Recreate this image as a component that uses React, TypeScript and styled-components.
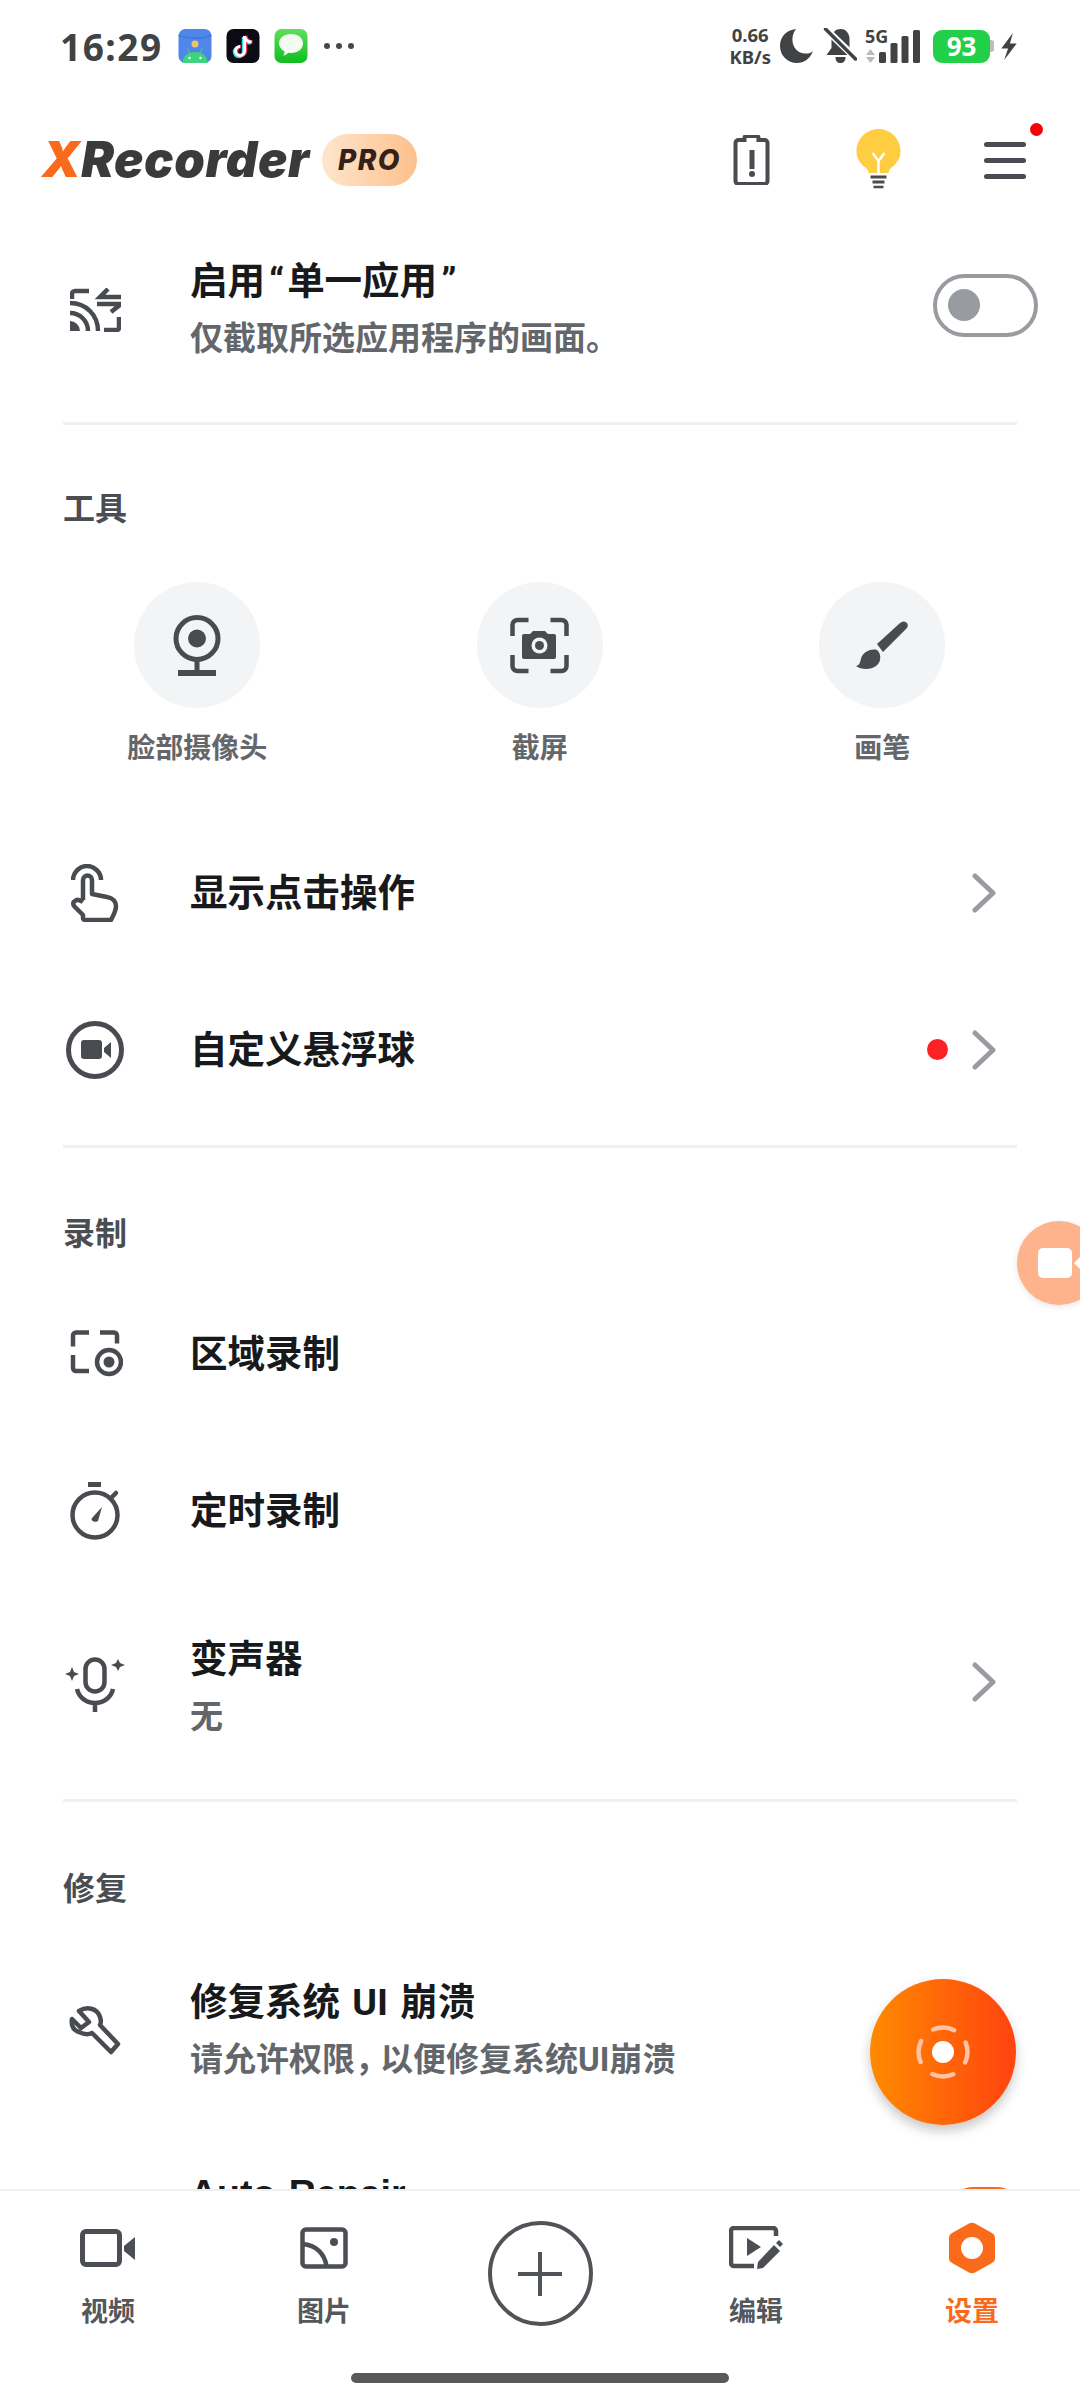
import React from "react";
import styled, { createGlobalStyle } from "styled-components";

const GlobalStyle = createGlobalStyle`
  html, body {
    margin: 0;
    padding: 0;
    background: #fff;
    font-family: Roboto, "Noto Sans CJK SC", sans-serif;
  }
  * { box-sizing: border-box; }
`;

const Page = styled.div`
  position: relative;
  width: 1080px;
  height: 2400px;
  overflow: hidden;
  background: #fff;
  display: flex;
  flex-direction: column;
`;

/* status bar */
const StatusBar = styled.div`
  height: 92px;
  flex-shrink: 0;
  padding: 0 63px 0 60px;
  display: flex;
  align-items: center;
  justify-content: space-between;
  color: #404244;
`;

const StatusGroup = styled.div`
  display: flex;
  align-items: center;
`;

const Clock = styled.span`
  font-family: "Noto Sans", sans-serif;
  font-size: 37px;
  font-weight: 700;
  letter-spacing: 1.5px;
  margin-right: 15px;
`;

const NotifIcon = styled.svg`
  width: 34px;
  height: 34px;
  margin-right: 14px;
`;

const MoreDots = styled.svg`
  margin-left: 2px;
`;

const NetSpeed = styled.div`
  display: flex;
  flex-direction: column;
  align-items: center;
  font-family: "Noto Sans", sans-serif;
  font-weight: 700;
  font-size: 18.5px;
  line-height: 22px;
  margin-right: 9px;
`;

const StatusGlyph = styled.svg<{ $left?: number }>`
  display: block;
  margin-left: ${({ $left }) => $left ?? 0}px;
`;

const SignalBox = styled.div`
  position: relative;
  width: 55px;
  height: 34px;
  margin-left: 8px;
`;

const NetworkType = styled.span`
  position: absolute;
  left: 0;
  top: -3px;
  font-family: "Noto Sans", sans-serif;
  font-weight: 700;
  font-size: 18px;
  line-height: 20px;
`;

const NetworkArrows = styled.svg`
  position: absolute;
  left: 1px;
  bottom: 0;
`;

const SignalBars = styled.svg`
  position: absolute;
  right: 0;
  bottom: 0;
`;

const Battery = styled.div`
  width: 57px;
  height: 33px;
  border-radius: 9px;
  background: #22cf48;
  color: #fff;
  font-family: "Noto Sans", sans-serif;
  font-size: 26px;
  font-weight: 700;
  display: flex;
  align-items: center;
  justify-content: center;
  margin-left: 13px;
`;

const BatteryCap = styled.div`
  width: 4px;
  height: 12px;
  background: #bdbdbd;
  border-radius: 0 3px 3px 0;
  margin-right: 7px;
`;

/* header */
const Header = styled.div`
  height: 136px;
  flex-shrink: 0;
  padding: 0 54px 0 42px;
  display: flex;
  align-items: center;
`;

const Logo = styled.div`
  font-family: Inter, sans-serif;
  font-size: 49px;
  font-weight: 900;
  font-style: italic;
  color: #3a3a3a;
  letter-spacing: 0.6px;
  line-height: 52px;
`;

const LogoX = styled.span`
  color: #fb6a1c;
`;

const ProBadge = styled.div`
  width: 95px;
  height: 52px;
  margin-left: 12px;
  border-radius: 26px;
  background: linear-gradient(90deg, #fde6cd, #fdc08c);
  color: #33211a;
  font-family: Inter, sans-serif;
  font-size: 28px;
  font-weight: 800;
  font-style: italic;
  letter-spacing: 1.5px;
  display: flex;
  align-items: center;
  justify-content: center;
`;

const HeaderActions = styled.div`
  margin-left: auto;
  display: flex;
  align-items: center;
`;

const HeaderIcon = styled.svg<{ $gap: number }>`
  display: block;
  margin-left: ${({ $gap }) => $gap}px;
`;

const MenuButton = styled.div`
  position: relative;
  margin-left: 83px;
  height: 37px;
`;

const MenuDot = styled.span`
  position: absolute;
  top: -19px;
  right: -17px;
  width: 13px;
  height: 13px;
  border-radius: 50%;
  background: #fa0007;
`;

/* list */
const Content = styled.div`
  flex: 1;
  min-height: 0;
  overflow: hidden;
  display: flex;
  flex-direction: column;
`;

const Row = styled.div<{ $height: number; $top?: number }>`
  height: ${({ $height }) => $height}px;
  margin-top: ${({ $top }) => $top ?? 0}px;
  flex-shrink: 0;
  padding: 0 42px 0 63px;
  display: flex;
  align-items: center;
`;

const RowIcon = styled.div<{ $shift?: number }>`
  width: 64px;
  margin-right: 63px;
  margin-top: ${({ $shift }) => $shift ?? 0}px;
  display: flex;
  justify-content: center;
  flex-shrink: 0;
  color: #484b4f;
`;

const RowText = styled.div<{ $shift?: number }>`
  flex: 1;
  min-width: 0;
  margin-top: ${({ $shift }) => $shift ?? 0}px;
  display: flex;
  flex-direction: column;
  gap: 20px;
`;

const RowTitle = styled.div`
  font-size: 37.5px;
  line-height: 38px;
  font-weight: 700;
  color: #18191b;
  word-spacing: 3px;
`;

const Quote = styled.span`
  padding: 0 3px 0 4px;
`;

const RowSub = styled.div`
  font-size: 33px;
  line-height: 38px;
  font-weight: 700;
  color: #63676b;
`;

const TightComma = styled.span`
  letter-spacing: -8px;
`;

const Divider = styled.div<{ $top: number }>`
  height: 3px;
  flex-shrink: 0;
  margin: ${({ $top }) => $top}px 63px 0;
  background: #eff0f1;
`;

const SectionTitle = styled.div<{ $top: number; $bottom: number }>`
  flex-shrink: 0;
  padding: ${({ $top }) => $top}px 63px 0;
  margin-bottom: ${({ $bottom }) => $bottom}px;
  font-size: 32px;
  line-height: 38px;
  font-weight: 700;
  color: #4a4d51;
`;

const Toggle = styled.div`
  width: 105px;
  height: 63px;
  margin-top: -10px;
  flex-shrink: 0;
  border: 4px solid #989ca0;
  border-radius: 32px;
  display: flex;
  align-items: center;
  padding-left: 11px;
`;

const ToggleKnob = styled.span`
  width: 32px;
  height: 32px;
  border-radius: 50%;
  background: #989ca0;
`;

const RedDot = styled.span`
  width: 21px;
  height: 21px;
  border-radius: 50%;
  background: #fb2226;
  margin-right: 24px;
`;

const Chevron = styled.svg`
  display: block;
  margin-right: 42px;
`;

const ToolGrid = styled.div`
  display: flex;
  flex-shrink: 0;
  padding-left: 26px;
`;

const Tool = styled.div`
  width: 342.5px;
  display: flex;
  flex-direction: column;
  align-items: center;
`;

const ToolCircle = styled.div`
  width: 126px;
  height: 126px;
  flex-shrink: 0;
  border-radius: 50%;
  background: #f3f4f6;
  display: flex;
  align-items: center;
  justify-content: center;
  margin-bottom: 24px;
`;

const ToolLabel = styled.div`
  font-size: 28px;
  line-height: 34px;
  font-weight: 700;
  color: #63676b;
`;

const PartialTitle = styled(RowTitle)`
  font-family: "Liberation Sans", sans-serif;
`;

/* floating buttons */
const SideBubble = styled.div`
  position: absolute;
  left: 1017px;
  top: 1221px;
  width: 84px;
  height: 84px;
  border-radius: 50%;
  background: #ffb38c;
  box-shadow: 0 2px 6px rgba(0, 0, 0, 0.1);
`;

const SideBubbleIcon = styled.svg`
  position: absolute;
  left: 21px;
  top: 27px;
`;

const RecordFab = styled.div`
  position: absolute;
  left: 870px;
  top: 1979px;
  width: 146px;
  height: 146px;
  border-radius: 50%;
  background: linear-gradient(90deg, #ff8a00, #ff4310);
  box-shadow: 0 6px 12px rgba(0, 0, 0, 0.22);
  display: flex;
  align-items: center;
  justify-content: center;
`;

const PeekingToggle = styled.div`
  position: absolute;
  left: 952px;
  top: 2187px;
  width: 66px;
  height: 20px;
  border-radius: 33px 33px 0 0;
  background: #f4681f;
`;

/* bottom nav */
const BottomNav = styled.div`
  position: absolute;
  left: 0;
  right: 0;
  bottom: 0;
  height: 211px;
  background: #fff;
  border-top: 2px solid #eeeff0;
  padding-top: 28px;
  display: grid;
  grid-template-columns: repeat(5, 216px);
`;

const NavItem = styled.div<{ $active?: boolean }>`
  display: flex;
  flex-direction: column;
  align-items: center;
  color: ${({ $active }) => ($active ? "#f96a1a" : "#54575b")};
`;

const NavIconBox = styled.div`
  height: 58px;
  display: flex;
  align-items: center;
  justify-content: center;
  margin-bottom: 18px;
`;

const NavLabel = styled.div`
  font-size: 27px;
  line-height: 34px;
  font-weight: 700;
`;

const AddButton = styled.div`
  width: 105px;
  height: 105px;
  margin-top: 2px;
  border-radius: 50%;
  border: 4px solid #505357;
  display: flex;
  align-items: center;
  justify-content: center;
`;

const HomeIndicator = styled.div`
  position: absolute;
  left: 351px;
  bottom: 17px;
  width: 378px;
  height: 10px;
  border-radius: 5px;
  background: #58595b;
`;

const INK = "#484b4f";

const ChevronRight = () => (
  <Chevron width="24" height="40" viewBox="0 0 24 40">
    <path d="M3 3l18 17L3 37" fill="none" stroke="#989ca0" strokeWidth="5" strokeLinecap="round" strokeLinejoin="round" />
  </Chevron>
);

const CastIcon = () => (
  <svg width="51" height="44" viewBox="0 0 51 44" fill="none" stroke={INK} strokeWidth="4.5">
    <path d="M2 11V6a3 3 0 0 1 3-3h14" />
    <path d="M0 15c16 0 28 12 28 28M0 25c10 0 18 8 18 18" />
    <path d="M0 33a10 10 0 0 1 10 10H0z" fill={INK} stroke="none" />
    <path d="M38 1l-8 8h21M27 16h24l-10 8" />
    <path d="M49 29v11a2 2 0 0 1-2 2H34" />
  </svg>
);

const WebcamIcon = () => (
  <svg width="48" height="61" viewBox="0 0 48 61" fill="none" stroke={INK} strokeWidth="5">
    <circle cx="24" cy="23.5" r="21" />
    <circle cx="24" cy="23.5" r="9" fill={INK} stroke="none" />
    <path d="M24 45v12" />
    <path d="M5 58h38" strokeWidth="6" />
  </svg>
);

const ScreenshotIcon = () => (
  <svg width="59" height="57" viewBox="0 0 59 57" fill="none" stroke={INK} strokeWidth="4.5">
    <path d="M2.500 19V8a5 5 0 0 1 5-5h11M40.500 3h11a5 5 0 0 1 5 5v11M56.500 38v11a5 5 0 0 1-5 5h-11M18.500 54h-11a5 5 0 0 1-5-5V38" />
    <path d="M12 19a2 2 0 0 1 2-2h6l3-3h12l3 3h6a2 2 0 0 1 2 2v21a2 2 0 0 1-2 2H14a2 2 0 0 1-2-2z" fill={INK} stroke="none" />
    <circle cx="29.5" cy="28.5" r="8" fill="#f3f4f6" stroke="none" />
    <circle cx="29.5" cy="28.5" r="4.5" fill={INK} stroke="none" />
  </svg>
);

const BrushIcon = () => (
  <svg width="52" height="49" viewBox="0 0 52 49" fill={INK}>
    <path d="M21 23L44 2q4-3 7 0q2 3-1 6L27 31z" />
    <path d="M21 29c5 4 4 13-1 16-5 4-15 4-20 0 4-1 4-4 5-7 1-6 9-11 16-9z" />
  </svg>
);

const TapIcon = () => (
  <svg width="48" height="58" viewBox="0 0 48 58" fill="none" stroke={INK} strokeWidth="4.5" strokeLinejoin="round">
    <path d="M2 16C2 8 9 2 16 2s14 6 14 14" />
    <path d="M12 36V16a4.500 4.500 0 0 1 9 0v14l15 3c6 1 9 5 9 9 0 5-3 10-5 14H14a2 2 0 0 1-2-2v-3l-9-9c-1-2-1-4 1-5 2-2 5-1 8 1" />
  </svg>
);

const FloatIcon = () => (
  <svg width="58" height="58" viewBox="0 0 58 58">
    <circle cx="29" cy="29" r="26.5" fill="none" stroke={INK} strokeWidth="5" />
    <rect x="15" y="19" width="21" height="19" rx="3" fill={INK} />
    <path d="M38 27l7-6v16l-7-6z" fill={INK} />
  </svg>
);

const AreaIcon = () => (
  <svg width="56" height="47" viewBox="-4 0 56 47" fill="none" stroke={INK} strokeWidth="4.5">
    <path d="M18 2.500H5A3 3 0 0 0 2 5.500v11M29 2.500h14a3 3 0 0 1 3 3v8M2 25v13a3 3 0 0 0 3 3h13" />
    <circle cx="38" cy="32" r="12" />
    <circle cx="38" cy="32" r="5.5" fill={INK} stroke="none" />
  </svg>
);

const TimerIcon = () => (
  <svg width="50" height="58" viewBox="0 0 50 58" fill="none" stroke={INK} strokeWidth="4.5">
    <path d="M18 2.500h13" strokeWidth="5" />
    <circle cx="25" cy="33" r="22.5" />
    <path d="M41 16l5-5" strokeLinecap="round" />
    <path d="M22 36l10-11-4 14c-2 2-8 0-6-3z" fill={INK} stroke="none" />
  </svg>
);

const VoiceIcon = () => (
  <svg width="62" height="56" viewBox="0 0 62 56" fill="none" stroke={INK} strokeWidth="4.5">
    <rect x="21.5" y="2.5" width="19" height="32" rx="9.5" />
    <path d="M13 32c2 9 10 14 18 14s16-5 18-14M31 46v9" />
    <path d="M8 10l2 5 5 2-5 2-2 5-2-5-5-2 5-2zM54 2l2 4 5 2-5 2-2 4-2-4-5-2 5-2z" fill={INK} stroke="none" />
  </svg>
);

const WrenchIcon = () => (
  <svg width="52" height="52" viewBox="0 0 52 52" fill="none" stroke={INK} strokeWidth="4.5" strokeLinejoin="round">
    <path d="M3 14l9 9 8-6-10-11c8-5 18-3 21 6 1 3 1 6 0 8l18 19-7 8-19-19c-4 2-9 1-13-1C4 25 2 20 3 14z" />
  </svg>
);

const App = () => (
  <Page>
    <GlobalStyle />
    <StatusBar>
      <StatusGroup>
        <Clock>16:29</Clock>
        <NotifIcon viewBox="0 0 33 34">
          <rect width="33" height="34" rx="7" fill="#4f86ea" />
          <path d="M0 6c6 4 27 4 33 0" stroke="#3f74d6" strokeWidth="1.5" fill="none" />
          <circle cx="16.5" cy="15" r="3.5" fill="#e6c66a" />
          <path d="M9 19l3 6M24 19l-3 6" stroke="#3fd27f" strokeWidth="1" />
          <path d="M4 34c0-7 5-11 12.500-11S29 27 29 34z" fill="#3fd27f" />
          <circle cx="11" cy="29" r="1.2" fill="#fff" />
          <circle cx="22" cy="29" r="1.2" fill="#fff" />
        </NotifIcon>
        <NotifIcon viewBox="0 0 33 34">
          <rect width="33" height="34" rx="7" fill="#0b0b14" />
          <path d="M18 7v15a4.500 4.500 0 1 1-4.500-4.500M18 7c1 4 4 6 7 6" fill="none" stroke="#2fe3e8" strokeWidth="3.5" transform="translate(-1 1)" />
          <path d="M18 7v15a4.500 4.500 0 1 1-4.500-4.500M18 7c1 4 4 6 7 6" fill="none" stroke="#f4385f" strokeWidth="3.5" transform="translate(1 0)" />
          <path d="M18 7v15a4.500 4.500 0 1 1-4.500-4.500M18 7c1 4 4 6 7 6" fill="none" stroke="#fff" strokeWidth="3" />
        </NotifIcon>
        <NotifIcon viewBox="0 0 33 34">
          <defs>
            <linearGradient id="msgGreen" x1="0" y1="0" x2="0" y2="1">
              <stop offset="0" stopColor="#5ee05a" />
              <stop offset="1" stopColor="#0fbd1e" />
            </linearGradient>
          </defs>
          <rect width="33" height="34" rx="7" fill="url(#msgGreen)" />
          <path d="M16.500 5c7.500 0 12 4 12 9.500s-5 9.500-12 9.500c-1 0-2 0-3-.2-1 1.500-3 2.800-5 2.800 1-1 1.500-2.500 1.500-4C7 20.500 4.500 18 4.500 14.500 4.500 9 9.500 5 16.500 5z" fill="#f2fbf0" />
        </NotifIcon>
        <MoreDots width="30" height="8" viewBox="0 0 30 8" fill="#46484b">
          <circle cx="3" cy="4" r="3" />
          <circle cx="15" cy="4" r="3" />
          <circle cx="27" cy="4" r="3" />
        </MoreDots>
      </StatusGroup>
      <StatusGroup>
        <NetSpeed>
          <span>0.66</span>
          <span>KB/s</span>
        </NetSpeed>
        <StatusGlyph width="33" height="34" viewBox="0 0 33 34" fill="#404244">
          <path d="M16 0C6 1 0 8 0 17c0 10 8 17 17 17 7 0 13-4 16-12-3 3-7 3-11 2C13 22 9 9 16 0z" />
        </StatusGlyph>
        <StatusGlyph $left={10} width="34" height="36" viewBox="0 0 33 36" fill="#404244">
          <path d="M17 1c6 0 9 5 9 10v9l6 7H3l5-7v-9c0-5 3-10 9-10zM12 29h10c0 4-2 6-5 6s-5-2-5-6z" />
          <path d="M2 1l30 29" stroke="#fff" strokeWidth="7" />
          <path d="M2 1l30 30" stroke="#404244" strokeWidth="3.5" strokeLinecap="round" />
        </StatusGlyph>
        <SignalBox>
          <NetworkType>5G</NetworkType>
          <NetworkArrows width="9" height="14" viewBox="0 0 9 14" fill="#b9babb">
            <path d="M4.500 0L9 6H0zM0 8h9l-4.500 6z" />
          </NetworkArrows>
          <SignalBars width="41" height="33" viewBox="0 0 41 33" fill="#404244">
            <rect x="0" y="22" width="7" height="11" rx="1.5" />
            <rect x="11.500" y="13" width="7" height="20" rx="1.5" />
            <rect x="22.500" y="6" width="7" height="27" rx="1.5" />
            <rect x="34" y="0" width="7" height="33" rx="1.5" />
          </SignalBars>
        </SignalBox>
        <Battery>93</Battery>
        <BatteryCap />
        <StatusGlyph width="16" height="27" viewBox="0 0 16 28" fill="#404244">
          <path d="M12 0L0 16h7l-4 12 13-17H9z" />
        </StatusGlyph>
      </StatusGroup>
    </StatusBar>

    <Header>
      <Logo>
        <LogoX>X</LogoX>Recorder
      </Logo>
      <ProBadge>PRO</ProBadge>
      <HeaderActions>
        <HeaderIcon $gap={0} width="37" height="50" viewBox="0 0 36 50">
          <path d="M11 5V3a2 2 0 0 1 2-2h10a2 2 0 0 1 2 2v2h6a3 3 0 0 1 3 3v38a3 3 0 0 1-3 3H5a3 3 0 0 1-3-3V8a3 3 0 0 1 3-3z" fill="none" stroke={INK} strokeWidth="4" />
          <rect x="16" y="15" width="5" height="19" fill={INK} />
          <circle cx="18.5" cy="39" r="3" fill={INK} />
        </HeaderIcon>
        <HeaderIcon $gap={86} width="45" height="62" viewBox="0 0 44 62">
          <path d="M22 0c12 0 22 10 22 22 0 7-3 11-7 15-3 2-5 4-5 7H12c0-3-2-5-5-7-4-4-7-8-7-15C0 10 10 0 22 0z" fill="#fecd42" />
          <path d="M22 44V32M16 24l6 8 6-8" stroke="#fff" strokeWidth="2.5" fill="none" />
          <path d="M14 48h16M16 53h12" stroke={INK} strokeWidth="3" />
          <path d="M17 58h10" stroke={INK} strokeWidth="2.5" />
        </HeaderIcon>
        <MenuButton>
          <svg width="42" height="37" viewBox="0 0 42 37" fill={INK}>
            <rect y="0" width="42" height="5" rx="2.5" />
            <rect y="16" width="42" height="5" rx="2.5" />
            <rect y="32" width="42" height="5" rx="2.5" />
          </svg>
          <MenuDot />
        </MenuButton>
      </HeaderActions>
    </Header>

    <Content>
      <Row $height={164}>
        <RowIcon>
          <CastIcon />
        </RowIcon>
        <RowText>
          <RowTitle>
            启用<Quote>“</Quote>单一应用<Quote>”</Quote>
          </RowTitle>
          <RowSub>仅截取所选应用程序的画面。</RowSub>
        </RowText>
        <Toggle>
          <ToggleKnob />
        </Toggle>
      </Row>
      <Divider $top={30} />
      <SectionTitle $top={65} $bottom={54}>工具</SectionTitle>
      <ToolGrid>
        <Tool>
          <ToolCircle>
            <WebcamIcon />
          </ToolCircle>
          <ToolLabel>脸部摄像头</ToolLabel>
        </Tool>
        <Tool>
          <ToolCircle>
            <ScreenshotIcon />
          </ToolCircle>
          <ToolLabel>截屏</ToolLabel>
        </Tool>
        <Tool>
          <ToolCircle>
            <BrushIcon />
          </ToolCircle>
          <ToolLabel>画笔</ToolLabel>
        </Tool>
      </ToolGrid>
      <Row $height={157} $top={48}>
        <RowIcon>
          <TapIcon />
        </RowIcon>
        <RowText>
          <RowTitle>显示点击操作</RowTitle>
        </RowText>
        <ChevronRight />
      </Row>
      <Row $height={157}>
        <RowIcon>
          <FloatIcon />
        </RowIcon>
        <RowText>
          <RowTitle>自定义悬浮球</RowTitle>
        </RowText>
        <RedDot />
        <ChevronRight />
      </Row>
      <Divider $top={17} />
      <SectionTitle $top={67} $bottom={22}>录制</SectionTitle>
      <Row $height={157}>
        <RowIcon>
          <AreaIcon />
        </RowIcon>
        <RowText>
          <RowTitle>区域录制</RowTitle>
        </RowText>
      </Row>
      <Row $height={157}>
        <RowIcon>
          <TimerIcon />
        </RowIcon>
        <RowText>
          <RowTitle>定时录制</RowTitle>
        </RowText>
      </Row>
      <Row $height={186}>
        <RowIcon $shift={5}>
          <VoiceIcon />
        </RowIcon>
        <RowText $shift={12}>
          <RowTitle>变声器</RowTitle>
          <RowSub>无</RowSub>
        </RowText>
        <ChevronRight />
      </Row>
      <Divider $top={24} />
      <SectionTitle $top={68} $bottom={41}>修复</SectionTitle>
      <Row $height={164}>
        <RowIcon>
          <WrenchIcon />
        </RowIcon>
        <RowText>
          <RowTitle>修复系统 UI 崩溃</RowTitle>
          <RowSub>
            请允许权限<TightComma>，</TightComma>以便修复系统UI崩溃
          </RowSub>
        </RowText>
      </Row>
      <Row $height={160}>
        <RowIcon />
        <RowText>
          <PartialTitle>Auto Repair</PartialTitle>
        </RowText>
      </Row>
    </Content>

    <SideBubble>
      <SideBubbleIcon width="44" height="30" viewBox="0 0 44 30" fill="#fff">
        <rect x="0" y="0" width="34" height="30" rx="5" />
        <path d="M36 15l8-8v16z" />
      </SideBubbleIcon>
    </SideBubble>
    <RecordFab>
      <svg width="54" height="54" viewBox="0 0 54 54" fill="none">
        <circle cx="27" cy="27" r="11" fill="#fff" />
        <circle cx="27" cy="27" r="24.5" stroke="#ffc3a3" strokeWidth="4.5" strokeDasharray="21.5 17" strokeDashoffset="10.8" strokeLinecap="round" />
      </svg>
    </RecordFab>
    <PeekingToggle />

    <BottomNav>
      <NavItem>
        <NavIconBox>
          <svg width="56" height="38" viewBox="0 0 56 38" fill="none">
            <rect x="2.5" y="2.5" width="37" height="33" rx="3.5" stroke="#4b4e52" strokeWidth="5" />
            <path d="M44 17l11-9v23l-11-9z" fill="#4b4e52" />
          </svg>
        </NavIconBox>
        <NavLabel>视频</NavLabel>
      </NavItem>
      <NavItem>
        <NavIconBox>
          <svg width="48" height="42" viewBox="0 0 48 42" fill="none" stroke="#4b4e52" strokeWidth="4.5">
            <rect x="2.5" y="2.5" width="43" height="37" rx="3.5" />
            <path d="M2.500 17c14 1 22 10 24 22" />
            <circle cx="34" cy="15" r="4" fill="#4b4e52" stroke="none" />
          </svg>
        </NavIconBox>
        <NavLabel>图片</NavLabel>
      </NavItem>
      <NavItem>
        <AddButton>
          <svg width="44" height="44" viewBox="0 0 44 44" stroke="#505357" strokeWidth="4">
            <path d="M22 0v44M0 22h44" />
          </svg>
        </AddButton>
      </NavItem>
      <NavItem>
        <NavIconBox>
          <svg width="54" height="44" viewBox="0 0 54 44" fill="none">
            <path d="M25 40H5a3 3 0 0 1-3-3V5a3 3 0 0 1 3-3h39a3 3 0 0 1 3 3v5" stroke="#4b4e52" strokeWidth="4.5" />
            <path d="M18 12l14 9-14 9z" fill="#4b4e52" />
            <path d="M28 43l1-7 16-17 6 6-17 17zM47 17l3-3 4 4-3 3z" fill="#4b4e52" />
          </svg>
        </NavIconBox>
        <NavLabel>编辑</NavLabel>
      </NavItem>
      <NavItem $active>
        <NavIconBox>
          <svg width="46" height="52" viewBox="0 0 46 52">
            <path fillRule="evenodd" clipRule="evenodd" d="M20 1.500c2-1 4-1 6 0l17 9.500c2 1 3 3 3 5v20c0 2-1 4-3 5l-17 9.500c-2 1-4 1-6 0L3 41c-2-1-3-3-3-5V16c0-2 1-4 3-5zM23 15a11 11 0 1 0 0 22 11 11 0 0 0 0-22z" fill="#f96a1a" />
          </svg>
        </NavIconBox>
        <NavLabel>设置</NavLabel>
      </NavItem>
    </BottomNav>
    <HomeIndicator />
  </Page>
);

export default App;
